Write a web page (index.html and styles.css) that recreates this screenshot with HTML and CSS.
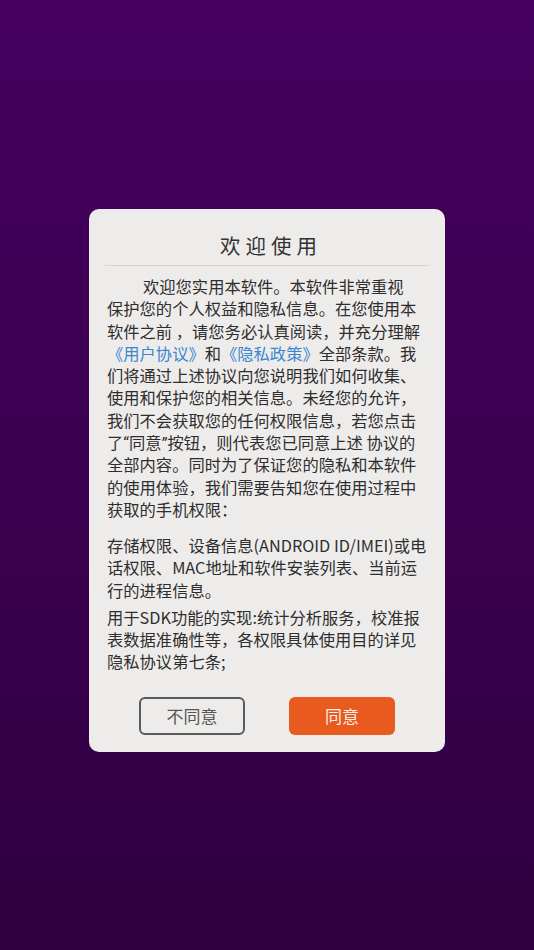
FILE: index.html
```html
<!DOCTYPE html>
<html lang="zh-CN">
<head>
    <meta charset="UTF-8">
    <meta name="viewport" content="width=device-width, initial-scale=1.0">
    <title>欢迎使用</title>
    <link rel="stylesheet" href="styles.css">
</head>
<body>
    <div class="dialog">
        <h2 class="dialog-title">欢迎使用</h2>
        <div class="divider"></div>

        <div class="dialog-body">
            <p class="intro">欢迎您实用本软件。本软件非常重视<br>保护您的个人权益和隐私信息。在您使用本<br>软件之前 ，请您务必认真阅读，并充分理解<br><a href="#" class="link">《用户协议》</a>和<a href="#" class="link">《隐私政策》</a>全部条款。我<br>们将通过上述协议向您说明我们如何收集、<br>使用和保护您的相关信息。未经您的允许，<br>我们不会获取您的任何权限信息，若您点击<br>了<span class="quote">“</span>同意<span class="quote">”</span>按钮，则代表您已同意上述 协议的<br>全部内容。同时为了保证您的隐私和本软件<br>的使用体验，我们需要告知您在使用过程中<br>获取的手机权限：</p>

            <p class="perm">存储权限、设备信息(ANDROID ID/IMEI)或电<br>话权限、MAC地址和软件安装列表、当前运<br>行的进程信息。</p>

            <p class="perm">用于SDK功能的实现:统计分析服务，校准报<br>表数据准确性等，各权限具体使用目的详见<br>隐私协议第七条;</p>
        </div>

        <!-- Buttons -->
        <div class="actions">
            <button class="btn btn-cancel">不同意</button>
            <button class="btn btn-ok">同意</button>
        </div>
    </div>
</body>
</html>
```

FILE: styles.css
```css
html, body {
    height: 100%;
}
body {
    margin: 0;
    padding-top: 209px;
    box-sizing: border-box;
    font-family: "Noto Sans CJK SC", "Noto Sans", sans-serif;
    background: linear-gradient(to bottom, #47005f, #2f0041);
}
.dialog {
    width: 356px;
    margin: 0 auto;
    padding: 22px 0 17px;
    box-sizing: border-box;
    background-color: #eeecea;
    border-radius: 10px;
}
.dialog-title {
    margin: 0;
    font-size: 20.5px;
    font-weight: normal;
    line-height: 28px;
    letter-spacing: 5px;
    text-indent: 8px;
    text-align: center;
    color: #333;
}
.divider {
    height: 1px;
    margin: 6px 16px 0;
    background-color: #d6d3d1;
}
.dialog-body {
    padding: 9px 10px 0 18px;
    font-size: 16.3px;
    line-height: 22.3px;
    color: #2e2e2e;
    white-space: nowrap;
}
.dialog-body p {
    margin: 0;
}
.intro {
    text-indent: 36px;
}
.perm {
    margin-top: 5px !important;
}
.intro + .perm {
    margin-top: 13.7px !important;
}
.link {
    color: #3a86d0;
    text-decoration: none;
}
.quote {
    font-family: Roboto, sans-serif;
    line-height: 1;
}
.actions {
    display: flex;
    justify-content: center;
    gap: 44px;
    margin-top: 24px;
}
.btn {
    width: 106px;
    height: 38px;
    font-family: inherit;
    font-size: 17px;
    border-radius: 6px;
    cursor: pointer;
}
.btn-cancel {
    background-color: transparent;
    border: 2px solid #5a5a5a;
    color: #555;
}
.btn-ok {
    background-color: #e85a1e;
    border: none;
    color: #fdeee6;
}
```
